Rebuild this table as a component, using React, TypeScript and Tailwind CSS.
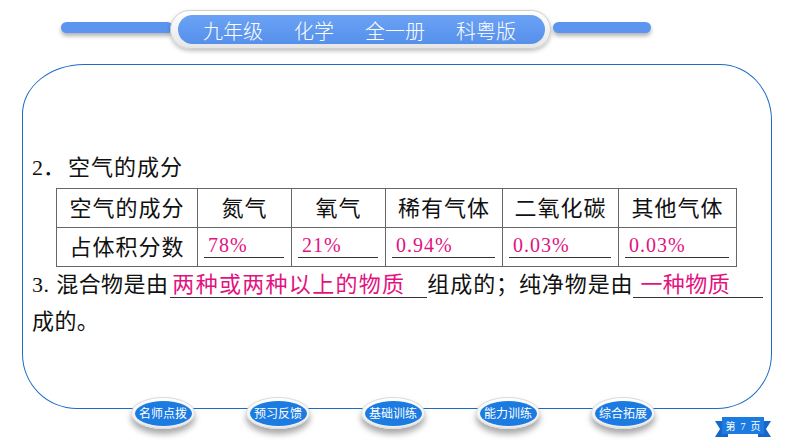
const navItems = ["名师点拨", "预习反馈", "基础训练", "能力训练", "综合拓展"];

const heads = ["空气的成分", "氮气", "氧气", "稀有气体", "二氧化碳", "其他气体"];
const values = ["78%", "21%", "0.94%", "0.03%", "0.03%"];
const widths = ["w-[141px]", "w-[94px]", "w-[94px]", "w-[117px]", "w-[116px]", "w-[118px]"];

const body = "font-['Liberation_Serif','Noto_Sans_CJK_SC',serif]";

function NavButton({ label }: { label: string }) {
  return (
    <div className="flex h-[32px] w-[64px] items-center justify-center rounded-[50%] border border-[#dcdcdc] bg-gradient-to-b from-white to-[#ececec] shadow-[0_5px_6px_rgba(0,0,0,0.35)]">
      <div className="flex h-[25px] w-[57px] items-center justify-center rounded-[50%] bg-[#1b7be0] font-['Noto_Sans_CJK_SC',serif] text-[12px] leading-none text-white">
        {label}
      </div>
    </div>
  );
}

function PageBadge() {
  return (
    <div className="relative h-[22px] w-[56px]">
      <svg width="56" height="22" viewBox="0 0 56 22" className="absolute inset-0">
        <polygon points="0,5 13,5 13,21 0,21 5,13" fill="#1667c9" />
        <polygon points="56,5 43,5 43,21 56,21 51,13" fill="#1667c9" />
        <rect x="7" y="1" width="42" height="17" fill="#1b7be0" />
      </svg>
      <div className="absolute left-0 right-0 top-[2px] flex h-[16px] items-center justify-center font-['Liberation_Serif','Noto_Sans_CJK_SC',serif] text-[10px] text-white">
        第&nbsp;&nbsp;7&nbsp;&nbsp;页
      </div>
    </div>
  );
}

export default function App() {
  return (
    <div className="relative h-[447px] w-[794px] overflow-hidden bg-white">
      {/* Header */}
      <div className="flex items-start pl-[61px] pt-[10px]">
        <div className="mt-[12px] h-[11px] w-[112px] rounded-full bg-[#5b95f0] shadow-[0_3px_4px_rgba(0,0,0,0.3)]" />
        <div className="-ml-[3px] h-[39px] w-[381px] rounded-full border border-[#cfcfcf] bg-gradient-to-b from-white to-[#e6e6e6] pb-[4px] pl-[7px] pr-[5px] pt-[4px] shadow-[0_2px_4px_rgba(0,0,0,0.25)]">
          <div className="flex h-full items-center gap-[31px] rounded-full bg-gradient-to-b from-[#6aa2f5] to-[#5690ea] pl-[25px] pt-[3px] font-['Noto_Sans_CJK_SC',sans-serif] text-[20px] font-light leading-none text-white">
            <span>九年级</span>
            <span>化学</span>
            <span>全一册</span>
            <span>科粤版</span>
          </div>
        </div>
        <div className="ml-[2px] mt-[12px] h-[11px] w-[98px] rounded-full bg-[#5b95f0] shadow-[0_3px_4px_rgba(0,0,0,0.3)]" />
      </div>

      {/* Card */}
      <div className="relative ml-[22px] mt-[15px] h-[345px] w-[750px] rounded-[62px_52px_55px_55px/50px_56px_55px_55px] border-[1.5px] border-[#1c6cc4] pl-[9px] pt-[88px]">
        <div className={`${body} h-[30px] text-[22px] leading-[30px] text-[#111]`}>
          2．<span className="ml-[3px] tracking-[1px]">空气的成分</span>
        </div>

        <table className={`${body} ml-[24px] mt-[5px] border-collapse text-[22px] text-[#111]`}>
          <tbody>
            <tr>
              {heads.map((h, i) => (
                <td key={h} className={`${widths[i]} h-[39px] border border-[#666] p-0 text-center tracking-[1px]`}>
                  {h}
                </td>
              ))}
            </tr>
            <tr>
              <td className="h-[39px] border border-[#666] p-0 text-center tracking-[1px]">占体积分数</td>
              {values.map((v, i) => (
                <td key={i} className="h-[39px] border border-[#666] p-0 align-top">
                  <div className="ml-[6px] mr-[7px] h-[30px] border-b border-[#333] pl-[4px] text-[20px] leading-[34px] tracking-[1px] text-[#e2137f]">
                    {v}
                  </div>
                </td>
              ))}
            </tr>
          </tbody>
        </table>

        <div className={`${body} mt-[1px] flex h-[34px] items-start text-[22px] leading-[34px] tracking-[0.4px] text-[#111]`}>
          <span className="mr-[7px]">3.</span>
          <span>混合物是由</span>
          <span className="ml-[2px] h-[30px] w-[257px] border-b border-[#333] pl-[2px] tracking-[1.3px] text-[#e2137f]">
            两种或两种以上的物质
          </span>
          <span className="tracking-[0.9px]">组成的；纯净物是由</span>
          <span className="h-[30px] w-[130px] border-b border-[#333] pl-[7px] text-[#e2137f]">一种物质</span>
        </div>
        <div className={`${body} mt-[3px] h-[34px] text-[22px] leading-[34px] tracking-[0.4px] text-[#111]`}>成的。</div>

        {/* Bottom navigation sitting on the card edge */}
        <div className="absolute -bottom-[21px] left-[108px] flex gap-[51px]">
          {navItems.map((n) => (
            <NavButton key={n} label={n} />
          ))}
        </div>
        <div className="absolute -bottom-[30px] right-0">
          <PageBadge />
        </div>
      </div>
    </div>
  );
}
